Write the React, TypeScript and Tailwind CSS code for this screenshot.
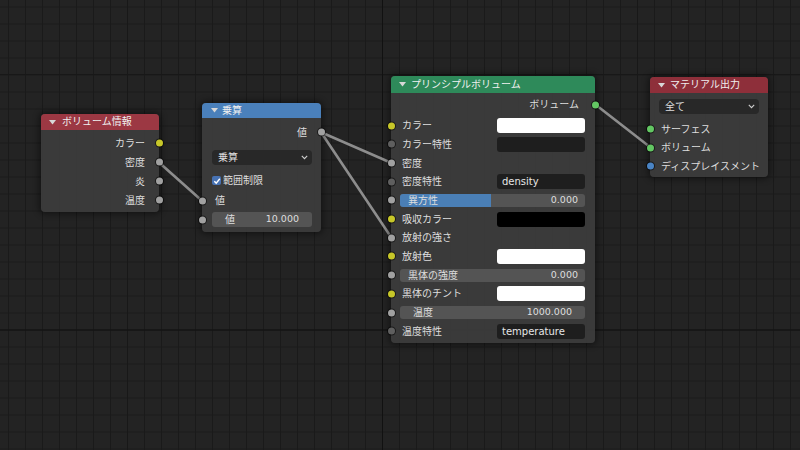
import React from "react";

type SockColor = "yellow" | "gray" | "dark" | "green" | "blue";
const sockCls: Record<SockColor, string> = {
  yellow: "bg-[#c7c729]",
  gray: "bg-[#a1a1a1]",
  dark: "bg-[#5f5f5f]",
  green: "bg-[#63c763]",
  blue: "bg-[#4a84c4]",
};

function Socket({ color, side }: { color: SockColor; side: "left" | "right" }) {
  return (
    <span
      className={`absolute top-1/2 -translate-y-1/2 w-[7px] h-[7px] rounded-full shadow-[0_0_0_1px_rgba(0,0,0,0.55)] ${sockCls[color]} ${
        side === "left" ? "-left-[3.5px]" : "-right-[3.5px]"
      }`}
    />
  );
}

function Tri() {
  return (
    <svg width="7" height="5" viewBox="0 0 7 5" className="shrink-0">
      <polygon points="0,0 7,0 3.5,4.5" fill="#d8d8d8" />
    </svg>
  );
}

function Chevron() {
  return (
    <svg width="7" height="5" viewBox="0 0 7 5" className="shrink-0">
      <polyline points="0.8,0.8 3.5,3.6 6.2,0.8" fill="none" stroke="#cfcfcf" strokeWidth="1.1" />
    </svg>
  );
}

function Header({ title, cls, h, triPad, gap }: { title: string; cls: string; h: string; triPad: string; gap: string }) {
  return (
    <div className={`flex items-center rounded-t-[4px] ${cls} ${h} ${triPad} ${gap}`}>
      <Tri />
      <span className="text-[#f0f0f0] text-[10px] leading-none">{title}</span>
    </div>
  );
}

const nodeBase =
  "absolute flex flex-col rounded-[4px] bg-[rgba(60,60,60,0.93)] shadow-[0_0_6px_2px_rgba(0,0,0,0.45)]";

export default function App() {
  return (
    <div className="relative w-[800px] h-[450px] overflow-hidden bg-[#232323] font-['DejaVu_Sans','Noto_Sans_CJK_JP',sans-serif] text-[10px] text-[#dedede]">
      <svg className="absolute inset-0" width="800" height="450">
        <defs>
          <pattern id="g" x="8" y="6.5" width="17" height="17" patternUnits="userSpaceOnUse">
            <rect x="0" y="0" width="1" height="17" fill="#1a1a1a" />
            <rect x="0" y="0" width="17" height="1" fill="#1a1a1a" />
          </pattern>
        </defs>
        <rect width="800" height="450" fill="url(#g)" />
        <rect x="127" y="0" width="1" height="450" fill="#181818" />
        <rect x="637" y="0" width="1" height="450" fill="#181818" />
        <rect x="0" y="74" width="800" height="1" fill="#181818" />
        <rect x="382" y="0" width="1" height="450" fill="#111111" />
        <rect x="0" y="329.5" width="800" height="1" fill="#111111" />
        <g stroke="#8d8d8d" strokeWidth="2.6" strokeLinecap="round">
          <line x1="158.5" y1="162" x2="202" y2="200.7" />
          <line x1="321" y1="132.3" x2="391" y2="162.7" />
          <line x1="321" y1="132.3" x2="391" y2="237" />
          <line x1="595" y1="104.3" x2="650" y2="147" />
        </g>
      </svg>

      {/* Node 1: ボリューム情報 */}
      <div className={`${nodeBase} left-[41px] top-[114px] w-[118px] h-[98px]`}>
        <Header title="ボリューム情報" cls="bg-[#9c3843]" h="h-[16px]" triPad="pl-[8px]" gap="gap-[6px]" />
        <div className="flex flex-col pt-[3.5px]">
          {[
            ["カラー", "yellow"],
            ["密度", "gray"],
            ["炎", "gray"],
            ["温度", "gray"],
          ].map(([l, c]) => (
            <div key={l} className="relative h-[19px] flex items-center justify-end pr-[14px]">
              <span>{l}</span>
              <Socket color={c as SockColor} side="right" />
            </div>
          ))}
        </div>
      </div>

      {/* Node 2: 乗算 */}
      <div className={`${nodeBase} left-[202px] top-[103px] w-[119px] h-[129px]`}>
        <Header title="乗算" cls="bg-[#4a80bb]" h="h-[15px]" triPad="pl-[9px]" gap="gap-[4px]" />
        <div className="relative mt-[5px] h-[18px] flex items-center justify-end pr-[14px]">
          <span>値</span>
          <Socket color="gray" side="right" />
        </div>
        <div className="mt-[9px] mx-[10px] mr-[9px] h-[15px] rounded-[4px] bg-[#282828] flex items-center justify-between pl-[6px] pr-[4px]">
          <span>乗算</span>
          <Chevron />
        </div>
        <div className="mt-[6px] h-[19px] flex items-center pl-[10px] gap-[2px]">
          <span className="w-[9px] h-[9px] rounded-[2px] bg-[#4772b3] flex items-center justify-center">
            <svg width="8" height="8" viewBox="0 0 8 8">
              <polyline points="1.3,4.2 3.2,6.1 6.8,1.8" fill="none" stroke="#ffffff" strokeWidth="1.4" />
            </svg>
          </span>
          <span>範囲制限</span>
        </div>
        <div className="relative mt-[1px] h-[19px] flex items-center pl-[13px]">
          <span>値</span>
          <Socket color="gray" side="left" />
        </div>
        <div className="relative mt-[2px] h-[15px]">
          <Socket color="gray" side="left" />
          <div className="mx-[10px] mr-[9px] h-full rounded-[3px] bg-[#545454] flex items-center justify-between pl-[13px] pr-[13px]">
            <span>値</span>
            <span className="text-[9.5px]">10.000</span>
          </div>
        </div>
      </div>

      {/* Node 3: プリンシプルボリューム */}
      <div className={`${nodeBase} left-[391px] top-[76px] w-[204px] h-[267px]`}>
        <Header title="プリンシプルボリューム" cls="bg-[#2e8a5a]" h="h-[17px]" triPad="pl-[8px]" gap="gap-[5px]" />
        <div className="relative mt-[2px] h-[19px] flex items-center justify-end pr-[16px]">
          <span>ボリューム</span>
          <Socket color="green" side="right" />
        </div>
        <div className="flex flex-col mt-[2.3px]">
          <Row3 label="カラー" sock="yellow" right={<Swatch cls="bg-white" />} />
          <Row3 label="カラー特性" sock="dark" right={<Swatch cls="bg-[#1e1e1e]" />} />
          <Row3 label="密度" sock="gray" />
          <Row3 label="密度特性" sock="dark" right={<TextField value="density" />} />
          <Row3
            sock="gray"
            full={
              <div className="relative ml-[9px] mr-[10px] h-[13px] rounded-[3px] bg-[#545454] overflow-hidden flex items-center justify-between pl-[8px] pr-[7px]">
                <span className="absolute left-0 top-0 bottom-0 w-[91px] bg-[#4a7fb6]" />
                <span className="relative">異方性</span>
                <span className="relative text-[9.5px]">0.000</span>
              </div>
            }
          />
          <Row3 label="吸収カラー" sock="yellow" right={<Swatch cls="bg-black" />} />
          <Row3 label="放射の強さ" sock="gray" />
          <Row3 label="放射色" sock="yellow" right={<Swatch cls="bg-white" />} />
          <Row3
            sock="gray"
            full={
              <div className="ml-[9px] mr-[10px] h-[13px] rounded-[3px] bg-[#545454] flex items-center justify-between pl-[8px] pr-[7px]">
                <span>黒体の強度</span>
                <span className="text-[9.5px]">0.000</span>
              </div>
            }
          />
          <Row3 label="黒体のチント" sock="yellow" right={<Swatch cls="bg-white" />} />
          <Row3
            sock="gray"
            full={
              <div className="ml-[9px] mr-[10px] h-[13px] rounded-[3px] bg-[#545454] flex items-center justify-between pl-[13px] pr-[13px]">
                <span>温度</span>
                <span className="text-[9.5px]">1000.000</span>
              </div>
            }
          />
          <Row3 label="温度特性" sock="dark" right={<TextField value="temperature" />} />
        </div>
      </div>

      {/* Node 4: マテリアル出力 */}
      <div className={`${nodeBase} left-[650px] top-[77px] w-[118px] h-[100px]`}>
        <Header title="マテリアル出力" cls="bg-[#8e2f3a]" h="h-[16px]" triPad="pl-[8px]" gap="gap-[5px]" />
        <div className="mt-[6px] mx-[9px] h-[15px] rounded-[4px] bg-[#282828] flex items-center justify-between pl-[6px] pr-[4px]">
          <span>全て</span>
          <Chevron />
        </div>
        <div className="flex flex-col mt-[5.75px]">
          {[
            ["サーフェス", "green"],
            ["ボリューム", "green"],
            ["ディスプレイスメント", "blue"],
          ].map(([l, c]) => (
            <div key={l} className="relative h-[18.5px] flex items-center pl-[11px]">
              <span className="whitespace-nowrap">{l}</span>
              <Socket color={c as SockColor} side="left" />
            </div>
          ))}
        </div>
      </div>
    </div>
  );
}

function Swatch({ cls }: { cls: string }) {
  return <div className={`w-[88px] h-[15px] rounded-[3px] ${cls}`} />;
}

function TextField({ value }: { value: string }) {
  return (
    <div className="w-[88px] h-[15px] rounded-[3px] bg-[#1e1e1e] flex items-center pl-[5px] text-[10px] text-[#e6e6e6]">
      {value}
    </div>
  );
}

function Row3({
  label,
  sock,
  right,
  full,
}: {
  label?: string;
  sock: SockColor;
  right?: React.ReactNode;
  full?: React.ReactNode;
}) {
  return (
    <div className="relative h-[18.7px] flex items-center">
      <Socket color={sock} side="left" />
      {full ? (
        <div className="flex-1">{full}</div>
      ) : (
        <div className="flex-1 flex items-center justify-between pl-[11px] pr-[10px]">
          <span>{label}</span>
          {right}
        </div>
      )}
    </div>
  );
}
